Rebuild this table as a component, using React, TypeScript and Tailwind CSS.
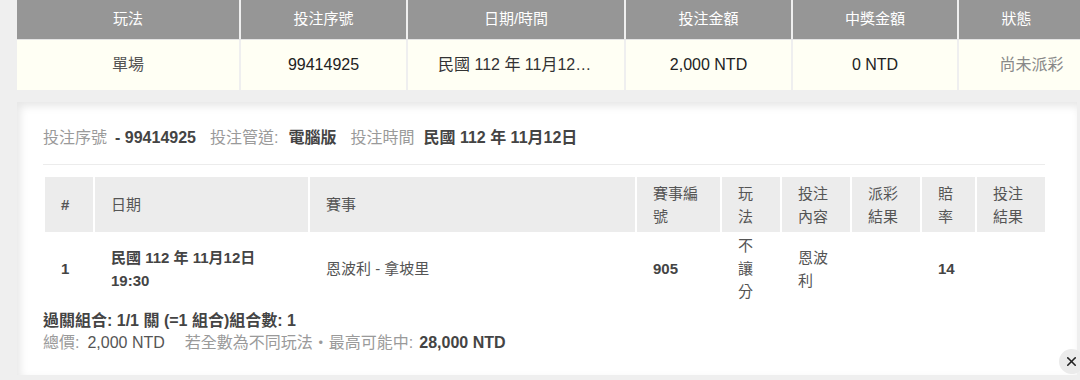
import { X } from "lucide-react";

const FONT = "font-['Liberation_Sans','Noto_Sans_CJK_TC',sans-serif]";

const summaryCols = [
  { label: "玩法", width: "w-[222px]" },
  { label: "投注序號", width: "w-[165px]" },
  { label: "日期/時間", width: "w-[216px]" },
  { label: "投注金額", width: "w-[165px]" },
  { label: "中獎金額", width: "w-[164px]" },
  { label: "狀態", width: "w-[145px] pr-[30px]" },
];

const detailCols = [
  { label: "#", width: "w-[48px]", bold: true },
  { label: "日期", width: "w-[213px]" },
  { label: "賽事", width: "w-[325px]" },
  { label: "賽事編號", width: "w-[83px]" },
  { label: "玩法", width: "w-[58px]" },
  { label: "投注內容", width: "w-[68px]" },
  { label: "派彩結果", width: "w-[68px]" },
  { label: "賠率", width: "w-[53px]" },
  { label: "投注結果", width: "w-[68px]" },
];

export default function App() {
  return (
    <div className={`${FONT} relative h-[380px] w-[1080px] overflow-hidden bg-[#efefef] pl-[17px]`}>
      {/* summary table */}
      <div className="flex w-max gap-[2px]">
        {summaryCols.map((col) => (
          <div
            key={col.label}
            className={`${col.width} flex h-[39px] items-center justify-center bg-[#969696] text-[15px] text-white`}
          >
            {col.label}
          </div>
        ))}
      </div>
      <div className="flex w-max gap-[2px] border-t border-[#e4e4e4]">
        <div className="flex h-[50px] w-[222px] items-center justify-center bg-[#fffff4] text-[16px] text-[#555]">單場</div>
        <div className="flex h-[50px] w-[165px] items-center justify-center bg-[#fffff4] text-[16px] text-[#222]">99414925</div>
        <div className="flex h-[50px] w-[216px] items-center bg-[#fffff4] px-[30px] text-[16px] text-[#333]">
          <span className="truncate">民國 112 年 11月12日 19:30</span>
        </div>
        <div className="flex h-[50px] w-[165px] items-center justify-center bg-[#fffff4] text-[16px] text-[#222]">2,000 NTD</div>
        <div className="flex h-[50px] w-[164px] items-center justify-center bg-[#fffff4] text-[16px] text-[#222]">0 NTD</div>
        <div className="flex h-[50px] w-[145px] items-center justify-center bg-[#fffff4] text-[16px] text-[#888]">尚未派彩</div>
      </div>

      {/* detail card */}
      <div className="mt-[12px] h-[273px] w-[1060px] bg-white pl-[26px] pr-[32px] pt-[25px] shadow-[inset_3px_4px_8px_rgba(0,0,0,0.10)]">
        <div className="flex items-center text-[16px] leading-[22px]">
          <span className="text-[#9a9a9a]">投注序號</span>
          <span className="ml-[8px] font-bold text-[#444]">- 99414925</span>
          <span className="ml-[14px] text-[#9a9a9a]">投注管道:</span>
          <span className="ml-[10px] font-bold text-[#444]">電腦版</span>
          <span className="ml-[14px] text-[#9a9a9a]">投注時間</span>
          <span className="ml-[9px] font-bold text-[#444]">民國 112 年 11月12日</span>
        </div>
        <div className="mt-[15px] border-t border-[#ececec]" />

        <div className="mt-[12px] ml-[2px] flex gap-[2px]">
          {detailCols.map((col) => (
            <div
              key={col.label}
              className={`${col.width} flex h-[55px] items-center bg-[#ececec] px-[16px] text-[15px] leading-[23px] text-[#555] ${col.bold ? "font-bold" : ""}`}
            >
              {col.label}
            </div>
          ))}
        </div>

        <div className="ml-[2px] flex gap-[2px] py-[2px] text-[15px] leading-[23px] text-[#555]">
          <div className="flex w-[48px] items-center px-[16px] font-bold text-[#444]">1</div>
          <div className="flex w-[213px] items-center px-[16px] font-bold text-[#444]">
            民國 112 年 11月12日
            <br />
            19:30
          </div>
          <div className="flex w-[325px] items-center px-[16px]">恩波利 - 拿坡里</div>
          <div className="flex w-[83px] items-center px-[16px] font-bold text-[#444]">905</div>
          <div className="flex w-[58px] items-center px-[16px]">不讓分</div>
          <div className="flex w-[68px] items-center px-[16px]">恩波利</div>
          <div className="w-[68px] px-[16px]" />
          <div className="flex w-[53px] items-center px-[16px] font-bold text-[#444]">14</div>
          <div className="w-[68px] px-[16px]" />
        </div>

        <div className="mt-[5px] text-[16px] leading-[22px]">
          <div className="font-bold text-[#444]">過關組合: 1/1 關 (=1 組合)組合數: 1</div>
          <div className="flex items-center">
            <span className="text-[#9a9a9a]">總價:</span>
            <span className="ml-[8px] text-[#555]">2,000 NTD</span>
            <span className="ml-[20px] text-[#9a9a9a]">若全數為不同玩法・最高可能中:</span>
            <span className="ml-[6px] font-bold text-[#444]">28,000 NTD</span>
          </div>
        </div>
      </div>

      <button
        type="button"
        className="absolute left-[1059px] top-[349px] flex h-[25px] w-[25px] items-center justify-center rounded-full bg-[#ebebeb] text-[#222]"
      >
        <X size={15} strokeWidth={2.5} />
      </button>
    </div>
  );
}
